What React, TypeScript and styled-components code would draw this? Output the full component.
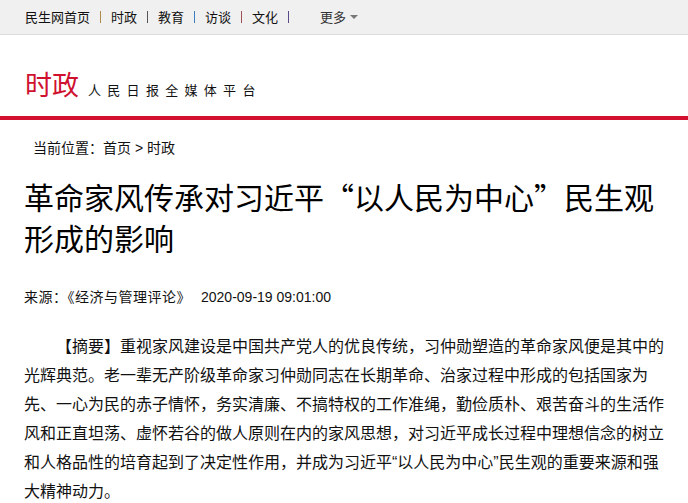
import React from "react";
import styled, { createGlobalStyle } from "styled-components";

const GlobalStyle = createGlobalStyle`
  html, body {
    margin: 0;
    padding: 0;
    background: #ffffff;
  }
  body {
    font-family: "Liberation Sans", "Noto Sans CJK SC", sans-serif;
    color: #111;
  }
`;

const NavBar = styled.div`
  height: 34px;
  background: #f0f0f0;
  border-bottom: 1px solid #dcdcdc;
  display: flex;
  align-items: center;
  padding-left: 25px;
  font-size: 13px;
`;

const NavLink = styled.a`
  color: #111;
  text-decoration: none;
  line-height: 1;
`;

const Separator = styled.span`
  display: inline-block;
  width: 1px;
  height: 12px;
  margin: 0 10px;
  background: ${(p: { $tint: string }) => p.$tint};
`;

const More = styled.span`
  margin-left: 21px;
  display: flex;
  align-items: center;
  color: #333;
  line-height: 1;
`;

const Caret = styled.span`
  margin-left: 4px;
  width: 0;
  height: 0;
  border-left: 4px solid transparent;
  border-right: 4px solid transparent;
  border-top: 4px solid #777;
`;

const ChannelHeader = styled.div`
  height: 81px;
  box-sizing: border-box;
  padding: 38px 0 0 25px;
  display: flex;
  align-items: baseline;
`;

const ChannelName = styled.span`
  font-size: 27px;
  line-height: 1;
  color: #d0102f;
`;

const ChannelSub = styled.span`
  margin-left: 9px;
  font-size: 13px;
  letter-spacing: 6.3px;
  color: #111;
`;

const RedRule = styled.div`
  height: 4px;
  background: #d3112f;
`;

const Content = styled.div`
  padding: 0 24px;
`;

const Breadcrumb = styled.div`
  margin-top: 18px;
  padding-left: 9px;
  font-size: 14px;
  line-height: 20px;
  color: #111;
`;

const Title = styled.h1`
  margin: 18px 0 0;
  font-family: "Noto Sans CJK SC", sans-serif;
  font-size: 30px;
  line-height: 41px;
  font-weight: normal;
  color: #000;
`;

const Meta = styled.div`
  margin-top: 28px;
  font-size: 14px;
  line-height: 20px;
  color: #111;
`;

const Source = styled.span`
  font-family: "Noto Sans CJK SC", sans-serif;
  letter-spacing: 0.5px;
`;

const Date = styled.span`
  margin-left: 10px;
`;

const Paragraph = styled.p`
  margin: 25px 0 0;
  font-size: 16px;
  line-height: 29px;
  text-indent: 2em;
  color: #111;
`;

const navItems = [
  { label: "民生网首页", tint: "#b08a4a" },
  { label: "时政", tint: "#555" },
  { label: "教育", tint: "#3c7fc0" },
  { label: "访谈", tint: "#a05050" },
  { label: "文化", tint: "#5a4a8a" },
];

const App: React.FC = () => (
  <>
    <GlobalStyle />
    <NavBar>
      {navItems.map((item) => (
        <React.Fragment key={item.label}>
          <NavLink href="#">{item.label}</NavLink>
          <Separator $tint={item.tint} />
        </React.Fragment>
      ))}
      <More>
        更多
        <Caret />
      </More>
    </NavBar>
    <ChannelHeader>
      <ChannelName>时政</ChannelName>
      <ChannelSub>人民日报全媒体平台</ChannelSub>
    </ChannelHeader>
    <RedRule />
    <Content>
      <Breadcrumb>当前位置：首页 &gt; 时政</Breadcrumb>
      <Title>革命家风传承对习近平“以人民为中心”民生观形成的影响</Title>
      <Meta>
        <Source>来源：《经济与管理评论》</Source>
        <Date>2020-09-19 09:01:00</Date>
      </Meta>
      <Paragraph>
        【摘要】重视家风建设是中国共产党人的优良传统，习仲勋塑造的革命家风便是其中的光辉典范。老一辈无产阶级革命家习仲勋同志在长期革命、治家过程中形成的包括国家为先、一心为民的赤子情怀，务实清廉、不搞特权的工作准绳，勤俭质朴、艰苦奋斗的生活作风和正直坦荡、虚怀若谷的做人原则在内的家风思想，对习近平成长过程中理想信念的树立和人格品性的培育起到了决定性作用，并成为习近平“以人民为中心”民生观的重要来源和强大精神动力。
      </Paragraph>
    </Content>
  </>
);

export default App;
